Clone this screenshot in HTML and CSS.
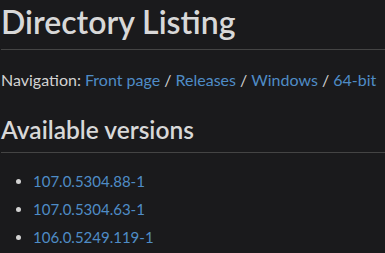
FILE: index.html
```html
<!DOCTYPE html>
<html>
<head>
<meta charset="utf-8">
<link rel="stylesheet" href="styles.css">
</head>
<body>
<h1 class="title">Directory Listing</h1>
<p class="nav">Navigation: <a href="#">Front page</a> / <a href="#">Releases</a> / <a href="#">Windows</a> / <a href="#">64-bit</a></p>
<h2 class="section">Available versions</h2>
<ul class="versions">
<li><a href="#">107.0.5304.88-1</a></li>
<li><a href="#">107.0.5304.63-1</a></li>
<li><a href="#">106.0.5249.119-1</a></li>
</ul>
</body>
</html>
```
FILE: styles.css
```css
html, body {
  margin: 0;
  padding: 0;
  background: #1a1a1c;
}
body {
  font-family: Lato, "Noto Sans", sans-serif;
  color: #d2d2d2;
  padding-left: 1px;
}
a {
  color: #4f8cc6;
  text-decoration: none;
}
.title {
  margin: 0;
  font-size: 32px;
  font-weight: 600;
  line-height: 44px;
  padding-top: 0;
  padding-bottom: 5px;
  border-bottom: 1px solid #444;
  color: #d8d8d8;
}
.nav {
  margin: 19px 0 0;
  font-size: 16px;
  line-height: 22px;
}
.section {
  margin: 22px 0 0;
  font-size: 24.5px;
  font-weight: 600;
  line-height: 33px;
  padding-bottom: 6px;
  border-bottom: 1px solid #444;
  color: #d8d8d8;
}
.versions {
  margin: 14px 0 0;
  padding-left: 32px;
  font-size: 15px;
  line-height: 28px;
}
```
